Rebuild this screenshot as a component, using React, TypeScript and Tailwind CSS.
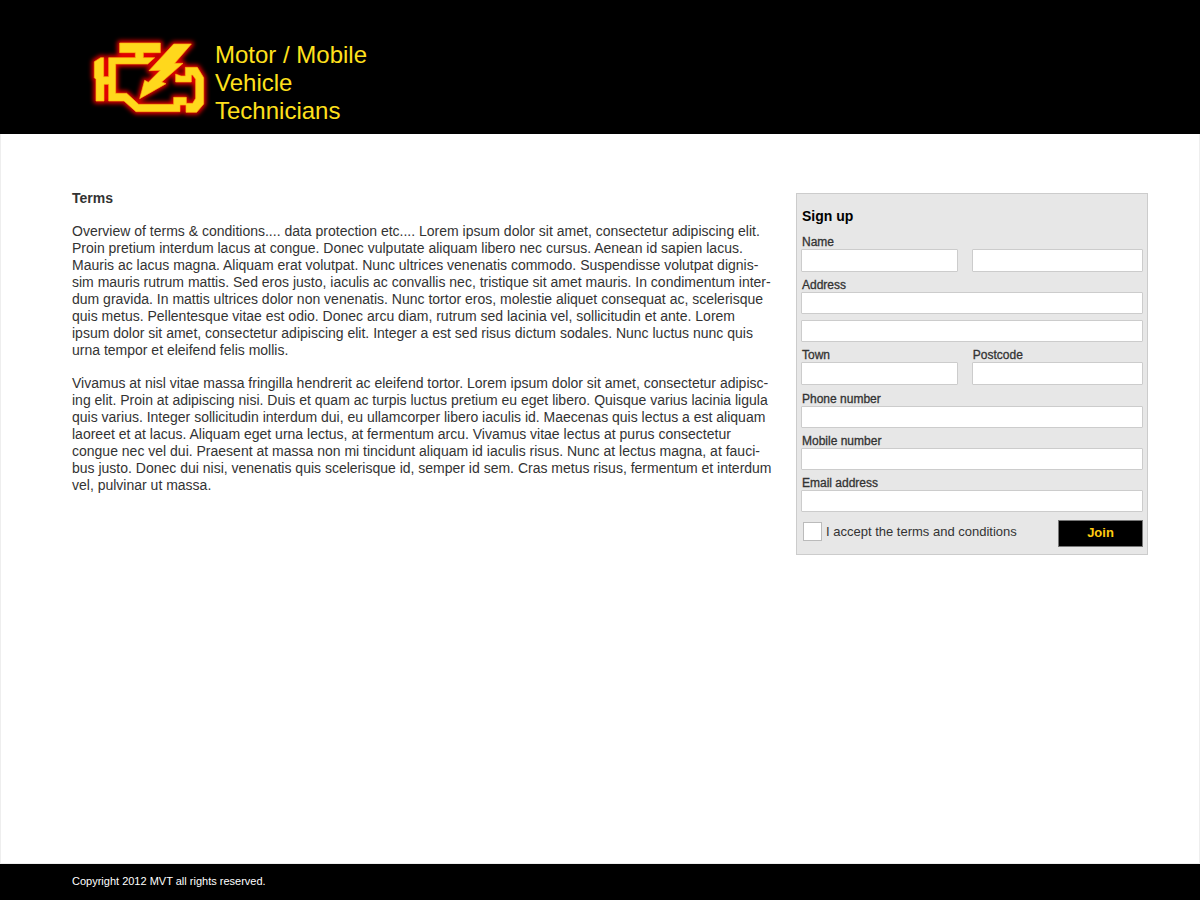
import { useState } from "react";
import type { InputHTMLAttributes } from "react";

const overview = [
  "Overview of terms & conditions.... data protection etc.... Lorem ipsum dolor sit amet, consectetur adipiscing elit.",
  "Proin pretium interdum lacus at congue. Donec vulputate aliquam libero nec cursus. Aenean id sapien lacus.",
  "Mauris ac lacus magna. Aliquam erat volutpat. Nunc ultrices venenatis commodo. Suspendisse volutpat dignis-",
  "sim mauris rutrum mattis. Sed eros justo, iaculis ac convallis nec, tristique sit amet mauris. In condimentum inter-",
  "dum gravida. In mattis ultrices dolor non venenatis. Nunc tortor eros, molestie aliquet consequat ac, scelerisque",
  "quis metus. Pellentesque vitae est odio. Donec arcu diam, rutrum sed lacinia vel, sollicitudin et ante. Lorem",
  "ipsum dolor sit amet, consectetur adipiscing elit. Integer a est sed risus dictum sodales. Nunc luctus nunc quis",
  "urna tempor et eleifend felis mollis.",
];

const details = [
  "Vivamus at nisl vitae massa fringilla hendrerit ac eleifend tortor. Lorem ipsum dolor sit amet, consectetur adipisc-",
  "ing elit. Proin at adipiscing nisi. Duis et quam ac turpis luctus pretium eu eget libero. Quisque varius lacinia ligula",
  "quis varius. Integer sollicitudin interdum dui, eu ullamcorper libero iaculis id. Maecenas quis lectus a est aliquam",
  "laoreet et at lacus. Aliquam eget urna lectus, at fermentum arcu. Vivamus vitae lectus at purus consectetur",
  "congue nec vel dui. Praesent at massa non mi tincidunt aliquam id iaculis risus. Nunc at lectus magna, at fauci-",
  "bus justo. Donec dui nisi, venenatis quis scelerisque id, semper id sem. Cras metus risus, fermentum et interdum",
  "vel, pulvinar ut massa.",
];

const enginePath =
  "M119 54H241V83H190V98H224L203 117H107V205H140L176 238H281V217H319V235H338L347 220V163L338 150H334V171H287V147L303 153H316V127H352L371 158V237L350 262H318V240H300V260H168L132 228H86V178H72V228H48V163L43 158V110L62 98H71V155H86V98H166V83H119Z";
const boltPath = "M281 57H334L284 115H309L245 171L258 176L179 221L194 166L205 172L241 136L207 137Z";

function EngineLogo() {
  return (
    <svg className="h-[105px] w-[140px] shrink-0" viewBox="0 0 420 315" aria-hidden="true">
      <defs>
        <filter id="glow" x="-20%" y="-20%" width="140%" height="140%">
          <feGaussianBlur stdDeviation="7" />
        </filter>
      </defs>
      <g filter="url(#glow)" fill="#e00000" stroke="#e00000" strokeWidth="15" strokeLinejoin="round">
        <path d={enginePath} />
        <path d={boltPath} />
      </g>
      <g fill="#ffd81c" stroke="#ffb010" strokeWidth="2">
        <path d={enginePath} />
        <path d={boltPath} />
      </g>
    </svg>
  );
}

function Paragraph({ lines }: { lines: string[] }) {
  return (
    <p className="text-[14px] leading-[17px] lg:whitespace-nowrap">
      {lines.map((line) => (
        <span key={line} className="block">
          {line}
        </span>
      ))}
    </p>
  );
}

function TextBox({ className = "h-[22px]", ...props }: InputHTMLAttributes<HTMLInputElement>) {
  return (
    <input
      type="text"
      className={`${className} block w-full rounded-[1px] border border-[#cccccc] bg-white px-1 text-xs`}
      {...props}
    />
  );
}

function Label({ id, text }: { id: string; text: string }) {
  return (
    <label htmlFor={id} className="block h-[14px] pl-px text-[12px] leading-[14px] [-webkit-text-stroke:0.3px_#333]">
      {text}
    </label>
  );
}

function Field({ id, label, type = "text" }: { id: string; label: string; type?: string }) {
  return (
    <div>
      <Label id={id} text={label} />
      <TextBox id={id} type={type} />
    </div>
  );
}

export default function App() {
  const [accepted, setAccepted] = useState(false);

  return (
    <div className="flex min-h-screen flex-col bg-white font-['Liberation_Sans',Arial,sans-serif] text-[#333333]">
      <header className="flex h-[134px] items-start bg-black pt-[25px] pl-20">
        <EngineLogo />
        <h1 className="-ml-[5px] pt-4 text-[24px] leading-[28px] text-[#ffe01c]">
          Motor / Mobile
          <br />
          Vehicle
          <br />
          Technicians
        </h1>
      </header>

      <main className="flex flex-1 items-start justify-between gap-4 border border-t-0 border-[#eeeeee] pt-14 pr-[51px] pb-8 pl-[71px]">
        <section className="flex min-w-0 flex-1 flex-col gap-4">
          <h2 className="text-[14px] leading-[17px] font-bold">Terms</h2>
          <Paragraph lines={overview} />
          <Paragraph lines={details} />
        </section>

        <form
          className="mt-[3px] w-[352px] shrink-0 border border-[#cccccc] bg-[#e7e7e7] px-1 pt-[14px] pb-[7px]"
          onSubmit={(e) => e.preventDefault()}
        >
          <h2 className="pl-px text-[14px] leading-[17px] font-bold text-black">Sign up</h2>
          <div className="flex flex-col gap-[6px] pt-[10px]">
            <div className="grid grid-cols-[11fr_12fr] items-end gap-x-[14px]">
              <div>
                <Label id="first-name" text="Name" />
                <TextBox id="first-name" className="h-[23px]" />
              </div>
              <TextBox aria-label="Last name" className="h-[23px]" />
            </div>
            <Field id="address-1" label="Address" />
            <TextBox aria-label="Address line 2" />
            <div className="grid grid-cols-[11fr_12fr] gap-x-[14px] pb-px">
              <div>
                <Label id="town" text="Town" />
                <TextBox id="town" className="h-[23px]" />
              </div>
              <div>
                <Label id="postcode" text="Postcode" />
                <TextBox id="postcode" className="h-[23px]" />
              </div>
            </div>
            <Field id="phone" label="Phone number" type="tel" />
            <Field id="mobile" label="Mobile number" type="tel" />
            <Field id="email" label="Email address" type="email" />
          </div>
          <div className="flex items-start justify-between pt-2">
            <label className="flex items-center gap-1 pt-[2px] pl-[2px] text-[13px] leading-[14px]">
              <input
                type="checkbox"
                checked={accepted}
                onChange={(e) => setAccepted(e.target.checked)}
                className="size-[19px] appearance-none border border-[#bbbbbb] bg-white checked:bg-[#333333]"
              />
              I accept the terms and conditions
            </label>
            <button
              type="submit"
              className="h-[27px] w-[85px] border border-[#777777] bg-black pb-[2px] text-[13px] font-bold text-[#ffcc11]"
            >
              Join
            </button>
          </div>
        </form>
      </main>

      <footer className="flex h-9 items-center bg-black pb-[3px] pl-[72px] text-[11px] leading-[14px] text-white">
        Copyright 2012 MVT all rights reserved.
      </footer>
    </div>
  );
}
